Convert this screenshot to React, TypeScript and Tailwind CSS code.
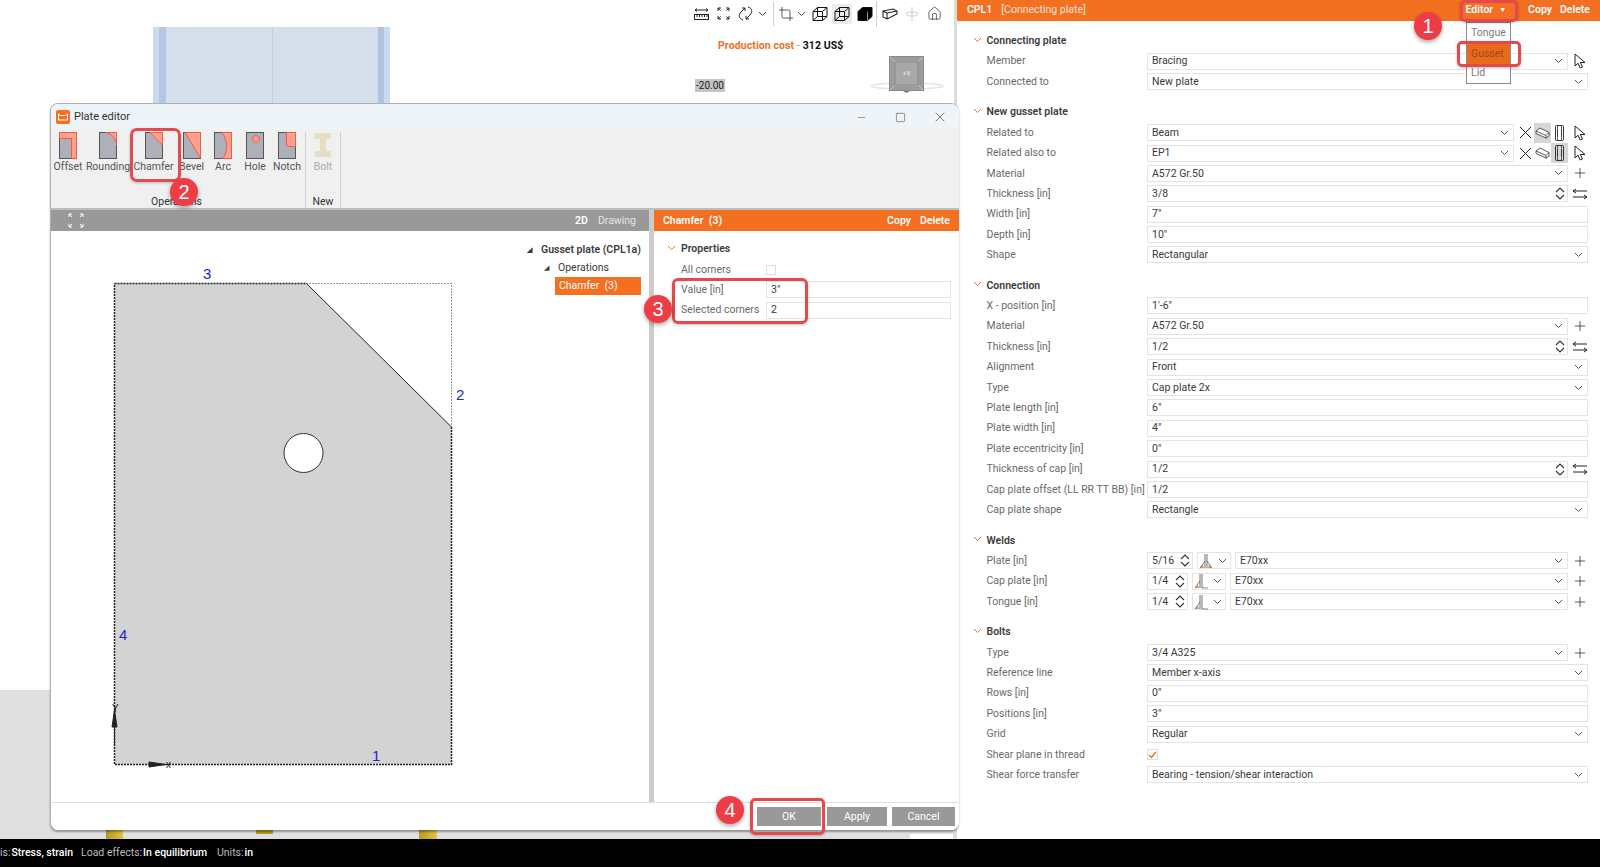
import { Crop, House, Minus, Plus, Square, X } from 'lucide-react';
import { ReactNode } from 'react';

const font = "font-['Roboto','Liberation_Sans',sans-serif]";

function Chevron({ className = 'text-[#555]' }: { className?: string }) {
  return (
    <svg width="9" height="6" viewBox="0 0 9 6" fill="none" className={`shrink-0 ${className}`}>
      <path d="M1 1l3.5 3.5L8 1" stroke="currentColor" strokeWidth="1" />
    </svg>
  );
}

function Spin() {
  return (
    <svg width="10" height="15" viewBox="0 0 10 15" fill="none" stroke="#333" strokeWidth="1.100" className="shrink-0">
      <path d="M1 6l4-4 4 4M1 9l4 4 4-4" />
    </svg>
  );
}

function Cursor() {
  return (
    <svg width="12" height="16" viewBox="0 0 12 16" fill="none" stroke="#222" strokeWidth="1">
      <path d="M1 1v12l3-2.800L6.200 15l2.300-1-2.200-4.500H11z" />
    </svg>
  );
}

function PlusIcon() {
  return <Plus size={16} strokeWidth={1.100} className="text-[#222]" />;
}

function Swap() {
  return (
    <svg width="16" height="12" viewBox="0 0 16 12" fill="none" stroke="#222" strokeWidth="1">
      <path d="M1 3h14M1 3l3-2M1 3l3 2" />
      <path d="M1 9h14M15 9l-3-2M15 9l-3 2" />
    </svg>
  );
}

function BeamIcon() {
  return (
    <svg width="15" height="12" viewBox="0 0 15 12" fill="none" stroke="#333" strokeWidth="0.800">
      <path d="M1 4l4-3 9 4.500v3.500l-3 2-10-4.500z" fill="#fff" />
      <path d="M1 4l10 4.500 3-3M11 8.500v3" />
    </svg>
  );
}

function ColumnIcon() {
  return (
    <svg width="9" height="16" viewBox="0 0 9 16" fill="none" stroke="#222" strokeWidth="0.900">
      <rect x="0.500" y="0.500" width="8" height="15" rx="1" />
      <path d="M2.500 3.500v9M6.500 3.500v9" />
      <path d="M2 2h1M6 2h1M2 14h1M6 14h1" strokeWidth="1.300" />
    </svg>
  );
}

function WeldIcon({ double }: { double?: boolean }) {
  return (
    <svg width="16" height="16" viewBox="0 0 16 16" fill="none">
      <path d="M1 15l3-3.500 1 3.500z" fill="#f58a4b" />
      {double && <path d="M13 15l-3-3.500-1 3.500z" fill="#f58a4b" />}
      <path d="M6 1v14M8 1v14" stroke="#333" strokeWidth="0.700" />
      {double ? (
        <path d="M6 8l-5 7M8 8l5 7" stroke="#333" strokeWidth="0.600" />
      ) : (
        <path d="M6 8l-5 7M8 15h6" stroke="#333" strokeWidth="0.600" />
      )}
    </svg>
  );
}

function Field({ value, chevron, spin, className = 'flex-1' }: { value?: string; chevron?: boolean; spin?: boolean; className?: string }) {
  return (
    <div className={`flex h-[17px] min-w-0 items-center justify-between border border-[#e4e4e4] bg-white pl-[4px] text-[#3a3a3a] ${spin ? 'pr-[2px]' : 'pr-[4px]'} ${className}`}>
      <span className="whitespace-nowrap">{value}</span>
      {chevron && <Chevron />}
      {spin && <Spin />}
    </div>
  );
}

function Row({ label, children }: { label: string; children: ReactNode }) {
  return (
    <div className="flex h-[20.4px] items-center">
      <div className="w-[160.5px] shrink-0 whitespace-nowrap text-[#6a6a6a]">{label}</div>
      <div className="flex min-w-0 flex-1 items-center">{children}</div>
    </div>
  );
}

function Tail({ children }: { children: ReactNode }) {
  return <div className="flex w-[20px] shrink-0 items-center justify-center pl-[3px]">{children}</div>;
}

function Section({ title, children }: { title: string; children: ReactNode }) {
  return (
    <section className="mb-[10.2px]">
      <div className="relative flex h-[20.4px] items-center font-semibold text-[#3c3c3c]">
        <span className="absolute -left-[14px] top-[6px]">
          <Chevron className="text-[#f36f21]" />
        </span>
        {title}
      </div>
      {children}
    </section>
  );
}

function PickerRow({ label, value, active }: { label: string; value: string; active: 'beam' | 'column' }) {
  return (
    <Row label={label}>
      <Field value={value} chevron className="w-[366.5px] shrink-0" />
      <div className="ml-[3px] flex w-[54px] items-center">
        <span className="flex w-[17px] justify-center">
          <svg width="13" height="13" viewBox="0 0 13 13" fill="none" stroke="#222" strokeWidth="1">
            <path d="M1 1l11 11M12 1L1 12" />
          </svg>
        </span>
        <span className={`flex h-[20px] w-[17px] items-center justify-center ${active === 'beam' ? 'bg-[#d6d6d6]' : ''}`}>
          <BeamIcon />
        </span>
        <span className={`flex h-[20px] w-[17px] items-center justify-center ${active === 'column' ? 'bg-[#d6d6d6]' : ''}`}>
          <ColumnIcon />
        </span>
      </div>
      <Tail>
        <Cursor />
      </Tail>
    </Row>
  );
}

function WeldRow({ label, value, wide }: { label: string; value: string; wide?: boolean }) {
  return (
    <Row label={label}>
      <Field value={value} spin className={wide ? 'w-[46px] shrink-0' : 'w-[41px] shrink-0'} />
      <div className="ml-[4px] flex h-[17px] w-[34px] shrink-0 items-center justify-between border border-[#e4e4e4] pl-[1px] pr-[3px]">
        <WeldIcon double={wide} />
        <Chevron />
      </div>
      <Field value="E70xx" chevron className="ml-[4px] flex-1" />
      <Tail>
        <PlusIcon />
      </Tail>
    </Row>
  );
}

function PropertiesPanel() {
  return (
    <aside className="h-full w-[643px] shrink-0 bg-white text-[10.5px]">
      <header className="flex h-[20.5px] items-center bg-[#f36f21] pl-[10px] pr-[10px] text-white">
        <span className="font-semibold">CPL1</span>
        <span className="ml-[9px] text-[#fde3d3]">[Connecting plate]</span>
        <span className="ml-auto flex items-center font-semibold">
          <span className="mr-[6px]">Editor</span>
          <span className="mr-[22px] text-[7px]">▼</span>
          <span className="mr-[8px]">Copy</span>
          <span>Delete</span>
        </span>
      </header>
      <div className="pl-[29.5px] pr-[12px] pt-[10.2px]">
        <Section title="Connecting plate">
          <Row label="Member">
            <Field value="Bracing" chevron />
            <Tail>
              <Cursor />
            </Tail>
          </Row>
          <Row label="Connected to">
            <Field value="New plate" chevron />
          </Row>
        </Section>
        <Section title="New gusset plate">
          <PickerRow label="Related to" value="Beam" active="beam" />
          <PickerRow label="Related also to" value="EP1" active="column" />
          <Row label="Material">
            <Field value="A572 Gr.50" chevron />
            <Tail>
              <PlusIcon />
            </Tail>
          </Row>
          <Row label="Thickness [in]">
            <Field value="3/8" spin />
            <Tail>
              <Swap />
            </Tail>
          </Row>
          <Row label="Width [in]">
            <Field value={'7"'} />
          </Row>
          <Row label="Depth [in]">
            <Field value={'10"'} />
          </Row>
          <Row label="Shape">
            <Field value="Rectangular" chevron />
          </Row>
        </Section>
        <Section title="Connection">
          <Row label="X - position [in]">
            <Field value={'1\'-6"'} />
          </Row>
          <Row label="Material">
            <Field value="A572 Gr.50" chevron />
            <Tail>
              <PlusIcon />
            </Tail>
          </Row>
          <Row label="Thickness [in]">
            <Field value="1/2" spin />
            <Tail>
              <Swap />
            </Tail>
          </Row>
          <Row label="Alignment">
            <Field value="Front" chevron />
          </Row>
          <Row label="Type">
            <Field value="Cap plate 2x" chevron />
          </Row>
          <Row label="Plate length [in]">
            <Field value={'6"'} />
          </Row>
          <Row label="Plate width [in]">
            <Field value={'4"'} />
          </Row>
          <Row label="Plate eccentricity [in]">
            <Field value={'0"'} />
          </Row>
          <Row label="Thickness of cap [in]">
            <Field value="1/2" spin />
            <Tail>
              <Swap />
            </Tail>
          </Row>
          <Row label="Cap plate offset (LL RR TT BB) [in]">
            <Field value="1/2" />
          </Row>
          <Row label="Cap plate shape">
            <Field value="Rectangle" chevron />
          </Row>
        </Section>
        <Section title="Welds">
          <WeldRow label="Plate [in]" value="5/16" wide />
          <WeldRow label="Cap plate [in]" value="1/4" />
          <WeldRow label="Tongue [in]" value="1/4" />
        </Section>
        <Section title="Bolts">
          <Row label="Type">
            <Field value="3/4 A325" chevron />
            <Tail>
              <PlusIcon />
            </Tail>
          </Row>
          <Row label="Reference line">
            <Field value="Member x-axis" chevron />
          </Row>
          <Row label="Rows [in]">
            <Field value={'0"'} />
          </Row>
          <Row label="Positions [in]">
            <Field value={'3"'} />
          </Row>
          <Row label="Grid">
            <Field value="Regular" chevron />
          </Row>
          <Row label="Shear plane in thread">
            <span className="flex size-[11px] items-center justify-center border border-[#e0e0e0]">
              <svg width="9" height="8" viewBox="0 0 9 8" fill="none" stroke="#f36f21" strokeWidth="1.400">
                <path d="M1 4l2.500 2.500L8 1" />
              </svg>
            </span>
          </Row>
          <Row label="Shear force transfer">
            <Field value="Bearing - tension/shear interaction" chevron />
          </Row>
        </Section>
      </div>
    </aside>
  );
}

function WireCube({ solid }: { solid?: boolean }) {
  return (
    <svg width="16" height="16" viewBox="0 0 16 16" fill={solid ? '#000' : 'none'} stroke="#111" strokeWidth="1">
      <path d="M1 5.500L5.500 1.500H15V10.500L10.500 14.500H1z" />
      {!solid && <path d="M1 5.500h9.500v9M10.500 5.500L15 1.500M1 14.500l4.500-4V1.500M5.500 10.500H15" />}
      {solid && <path d="M10.500 5.500V14.500" stroke="#fff" strokeWidth="0.600" />}
    </svg>
  );
}

function Toolbar() {
  return (
    <div className="flex h-[27px] items-center justify-end pr-[12px] text-[#222]">
      <svg width="15" height="14" viewBox="0 0 15 14" fill="none" stroke="#222" strokeWidth="1" className="mr-[8px]">
        <path d="M1 3h13M1 3l2-1.500M1 3l2 1.500M14 3l-2-1.500M14 3l-2 1.500" />
        <rect x="0.500" y="7.500" width="14" height="5" />
        <path d="M3 8v2M5.500 8v2M8 8v2M10.500 8v2M13 8v2" />
      </svg>
      <svg width="13" height="13" viewBox="0 0 13 13" fill="none" stroke="#222" strokeWidth="1" className="mr-[8px]">
        <path d="M1 4V1h3M1 1l2.500 2.500M9 1h3v3M12 1L9.500 3.500M1 9v3h3M1 12l2.500-2.500M9 12h3V9M12 12L9.500 9.500" />
      </svg>
      <svg width="15" height="15" viewBox="0 0 15 15" fill="none" stroke="#222" strokeWidth="1">
        <path d="M5 14C1 13 0 9 3 6l4-4M7 5V2H4M10 1c4 1 5 5 2 8l-4 4M8 10v3h3" />
      </svg>
      <Chevron className="ml-[5px] text-[#444]" />
      <span className="ml-[6px] mr-[4px] h-[24px] w-px bg-[#d0d0d0]" />
      <Crop size={16} strokeWidth={1.100} />
      <Chevron className="ml-[3px] text-[#444]" />
      <span className="ml-[4px] flex size-[20px] items-center justify-center">
        <WireCube />
      </span>
      <span className="ml-[2px] flex size-[20px] items-center justify-center bg-[#ececec]">
        <WireCube />
      </span>
      <span className="ml-[3px] flex size-[20px] items-center justify-center">
        <WireCube solid />
      </span>
      <span className="ml-[1px] mr-[3px] h-[26px] w-px bg-[#d0d0d0]" />
      <svg width="16" height="12" viewBox="0 0 16 12" fill="none" stroke="#222" strokeWidth="1.100" className="ml-[2px]">
        <path d="M1 3l10-2 4 2v3L5 11 1 9zM1 3l4 2 10-2M5 5v6" />
      </svg>
      <svg width="14" height="14" viewBox="0 0 14 14" fill="none" stroke="#c9c9c9" strokeWidth="1" className="ml-[7px]">
        <path d="M7 0v14M1 7c0-2 4-2 6-2M13 7c0-2-4-2-6-2M1 7c0 2 4 2 6 2M13 7c0 2-4 2-6 2" />
      </svg>
      <House size={15} strokeWidth={1.100} className="ml-[8px]" />
    </div>
  );
}

function ModelCanvas() {
  return (
    <div className="relative h-full w-[957px] shrink-0 border-r-[3px] border-[#dcdcdc] bg-white">
      <div className="absolute left-[153px] top-[27px] flex h-[90px] w-[237px] border-x-[6px] border-[#cbdaee] bg-[#d5dfec]">
        <div className="w-[7px] bg-[#b4c7e0]" />
        <div className="flex-1 border-r border-[#bccfe8]" />
        <div className="flex-1" />
        <div className="w-[6px] bg-[#b0c4de]" />
      </div>
      <div className="absolute bottom-0 left-0 h-[149px] w-full bg-[#e0e0e0]" />
      <div className="absolute bottom-0 left-[106px] h-[9px] w-[17px] bg-gradient-to-r from-[#b89a1c] to-[#e0c640]" />
      <div className="absolute bottom-[5px] left-[256px] h-[5px] w-[17px] bg-[#b89a1c]" />
      <div className="absolute bottom-0 left-[419px] h-[9px] w-[18px] bg-gradient-to-r from-[#b89a1c] to-[#e0c640]" />
      <div className="absolute bottom-0 left-[910px] h-[5px] w-[43px] bg-white" />
      <div className="relative">
        <Toolbar />
        <p className="ml-[718px] mt-[12px] text-[10.5px] font-bold leading-[14px] tracking-[0.1px] text-[#f36f21]">
          Production cost <span className="font-normal">-</span> <span className="text-[#111]">312 US$</span>
        </p>
      </div>
      <div className="absolute left-[695px] top-[79px] flex h-[13px] w-[30px] items-center justify-center bg-[#c4c4c4] text-[10px] text-[#222]">-20.00</div>
      <svg width="76" height="40" viewBox="0 0 76 40" fill="none" className="absolute left-[869px] top-[55px]">
        <ellipse cx="38" cy="31" rx="36" ry="3" stroke="#e6e6e6" strokeWidth="1.500" />
        <rect x="20.500" y="1.500" width="34" height="34" fill="#9c9c9c" stroke="#8a8a8a" />
        <path d="M21 2l5 5h23l5-5M21 35l5-5h23l5 5" stroke="#c4c4c4" />
        <rect x="26" y="7" width="23" height="23" fill="#a8a8a8" stroke="#8a8a8a" />
        <text x="37.500" y="21" textAnchor="middle" fontSize="7" fill="#ececec" fontFamily="Roboto">+Y</text>
        <path d="M34 36h7l-3.500 2z" fill="#777" />
      </svg>
    </div>
  );
}

type OpKind = 'offset' | 'rounding' | 'chamfer' | 'bevel' | 'arc' | 'hole' | 'notch';

function OpIcon({ kind }: { kind: OpKind }) {
  const salmon = '#ff9f8c';
  const edge = '#e8604a';
  return (
    <svg width="18" height="27" viewBox="0 0 18 27" fill="none">
      <rect x="0.500" y="0.500" width="17" height="26" fill="#adb0b9" stroke="#555" />
      {kind === 'offset' && <path d="M0.500 0.500h17v26h-5V6.500H0.500z" fill={salmon} stroke={edge} />}
      {kind === 'rounding' && <path d="M6 0.500h11.500V13C17 6 12 1 6 0.500z" fill={salmon} stroke={edge} />}
      {kind === 'chamfer' && <path d="M5 0.500h12.500V13z" fill={salmon} stroke={edge} />}
      {kind === 'bevel' && <path d="M2 0.500h15.500V26z" fill={salmon} stroke={edge} />}
      {kind === 'arc' && <path d="M8 0.500h9.500v26H9c5-7 5-18-1-26z" fill={salmon} stroke={edge} />}
      {kind === 'hole' && <circle cx="10" cy="7" r="3.500" fill={salmon} stroke={edge} />}
      {kind === 'notch' && <path d="M8.500 0.500h9v14H11a2.500 2.500 0 0 1-2.500-2.500z" fill={salmon} stroke={edge} />}
    </svg>
  );
}

const ops: { label: string; kind: OpKind; width: string }[] = [
  { label: 'Offset', kind: 'offset', width: 'w-[34px]' },
  { label: 'Rounding', kind: 'rounding', width: 'w-[46px]' },
  { label: 'Chamfer', kind: 'chamfer', width: 'w-[45px]' },
  { label: 'Bevel', kind: 'bevel', width: 'w-[31px]' },
  { label: 'Arc', kind: 'arc', width: 'w-[32px]' },
  { label: 'Hole', kind: 'hole', width: 'w-[32px]' },
  { label: 'Notch', kind: 'notch', width: 'w-[32px]' },
];

function RibbonItem({ label, children, width, muted }: { label: string; children: ReactNode; width: string; muted?: boolean }) {
  return (
    <div className={`flex flex-col items-center ${width}`}>
      <div className="flex h-[28px] items-start justify-center">{children}</div>
      <span className={`whitespace-nowrap leading-[14px] ${muted ? 'text-[#aaa]' : 'text-[#555]'}`}>{label}</span>
    </div>
  );
}

function Ribbon() {
  return (
    <div className="flex h-[81px] border-b-2 border-[#bdbdbd] bg-[#f0f0f0] pt-[3px] text-[10.5px]">
      <div className="flex w-[255px] flex-col border-r border-[#cfcfcf]">
        <div className="flex flex-1">
          {ops.map((op) => (
            <RibbonItem key={op.kind} label={op.label} width={op.width}>
              <OpIcon kind={op.kind} />
            </RibbonItem>
          ))}
        </div>
        <div className="-mb-[1px] pr-[3px] text-center leading-[14px] text-[#333]">Operations</div>
      </div>
      <div className="flex w-[35px] flex-col border-r border-[#cfcfcf]">
        <div className="flex flex-1 justify-center">
          <RibbonItem label="Bolt" width="w-[35px]" muted>
            <svg width="16" height="26" viewBox="0 0 16 26" fill="#e6ddc4">
              <rect x="0" y="1" width="16" height="6" rx="1" />
              <rect x="5" y="6" width="6" height="14" />
              <rect x="0" y="19" width="16" height="6" rx="1" />
            </svg>
          </RibbonItem>
        </div>
        <div className="-mb-[1px] text-center leading-[14px] text-[#333]">New</div>
      </div>
    </div>
  );
}

function PlateDrawing() {
  return (
    <svg width="475" height="570" viewBox="51 232 475 570" className="shrink-0">
      <path d="M114.500 284.500H306.500L451.500 428V765.500H114.500z" fill="#d3d3d3" />
      <path d="M306.500 284.500H451.500V428" fill="none" stroke="#333" strokeWidth="1" strokeDasharray="1 2" />
      <path d="M306.500 284.500L451.500 428" fill="none" stroke="#222" strokeWidth="1" />
      <path d="M114.500 284.500H306.500M451.500 428V765.500H114.500V284.500" fill="none" stroke="#222" strokeWidth="1.500" strokeDasharray="2 1" />
      <circle cx="303.500" cy="454" r="19.500" fill="#fff" stroke="#333" strokeWidth="1" />
      <g fontFamily="Liberation Sans" fontSize="15" fill="#2222cc">
        <text x="203" y="280">3</text>
        <text x="456" y="401">2</text>
        <text x="119" y="641">4</text>
        <text x="372" y="762">1</text>
      </g>
      <path d="M114.500 745v-32M114.500 711l-2.500 17h5z" stroke="#222" strokeWidth="1" fill="#222" />
      <path d="M148 765.500h15M166 765.500l-17-2.500v5z" stroke="#222" strokeWidth="1" fill="#222" />
      <g fontFamily="Liberation Sans" fontSize="10" fill="#222">
        <text x="112" y="713">Y</text>
        <text x="166" y="769">x</text>
      </g>
    </svg>
  );
}

function PlateEditor() {
  return (
    <div className="absolute left-[50px] top-[103px] flex h-[727px] w-[909px] flex-col overflow-hidden rounded-t-lg rounded-b-lg border-l border-t border-[#b0b0b0] bg-white text-[10.5px] shadow-[0_2px_2px_rgba(0,0,0,0.35)]">
      <div className="flex h-[25px] shrink-0 items-center bg-[#eef4f8] pl-[5px] pt-[1px] text-[11px] text-[#333]">
        <svg width="14" height="14" viewBox="0 0 14 14" className="mr-[4px]">
          <rect width="14" height="14" rx="2" fill="#f36f21" />
          <path d="M2.500 4l2 1.500h5l2-1.500v6h-9z" fill="none" stroke="#fff" strokeWidth="1" />
        </svg>
        Plate editor
        <div className="ml-auto flex items-center text-[#333]">
          <span className="flex w-[39px] justify-center">
            <Minus size={11} strokeWidth={1} />
          </span>
          <span className="flex w-[39px] justify-center">
            <Square size={11} strokeWidth={1.100} />
          </span>
          <span className="flex w-[39px] justify-center">
            <X size={16} strokeWidth={1} />
          </span>
        </div>
      </div>
      <Ribbon />
      <div className="flex min-h-0 flex-1">
        <div className="flex w-[598px] shrink-0 flex-col">
          <div className="flex h-[21px] shrink-0 items-center bg-[#999] pl-[17px] pr-[13px] text-white">
            <svg width="16" height="15" viewBox="0 0 16 15" fill="none" stroke="#fff" strokeWidth="1">
              <path d="M1 1l3 3M1 1h3M1 1v3M15 1l-3 3M15 1h-3M15 1v3M1 14l3-3M1 14h3M1 14v-3M15 14l-3-3M15 14h-3M15 14v-3" />
            </svg>
            <span className="ml-auto font-semibold">2D</span>
            <span className="ml-[10px] text-[#e6e6e6]">Drawing</span>
          </div>
          <div className="flex min-h-0 flex-1">
            <PlateDrawing />
            <div className="pt-[10px] text-[#3c3c3c]">
              <div className="flex h-[18px] items-center font-semibold">
                <span className="ml-[1px] mr-[9px] text-[7px]">◢</span>
                <span className="whitespace-nowrap">Gusset plate (CPL1a)</span>
              </div>
              <div className="ml-[18px] flex h-[18px] items-center">
                <span className="mr-[9px] text-[7px]">◢</span>
                Operations
              </div>
              <div className="ml-[29px] flex h-[18px] w-[86px] items-center bg-[#f36f21] pl-[4px] text-white">Chamfer&nbsp; (3)</div>
            </div>
          </div>
        </div>
        <div className="w-[5px] shrink-0 bg-[#cccccc]" />
        <div className="flex min-w-0 flex-1 flex-col">
          <div className="flex h-[21px] shrink-0 items-center bg-[#f36f21] pl-[9px] pr-[9px] font-semibold text-white">
            Chamfer&nbsp; (3)
            <span className="ml-auto">Copy</span>
            <span className="ml-[9px]">Delete</span>
          </div>
          <div className="pl-[27px] pr-[8px] pt-[8px]">
            <div className="relative flex h-[20.4px] items-center font-semibold text-[#3c3c3c]">
              <span className="absolute -left-[14px] top-[6px]">
                <Chevron className="text-[#f36f21]" />
              </span>
              Properties
            </div>
            <div className="flex h-[20.4px] items-center">
              <span className="w-[85px] text-[#6a6a6a]">All corners</span>
              <span className="size-[10px] border border-[#dcdcdc]" />
            </div>
            <div className="flex h-[20.4px] items-center">
              <span className="w-[85px] text-[#6a6a6a]">Value [in]</span>
              <Field value={'3"'} />
            </div>
            <div className="flex h-[20.4px] items-center">
              <span className="w-[85px] whitespace-nowrap text-[#6a6a6a]">Selected corners</span>
              <Field value="2" />
            </div>
          </div>
        </div>
      </div>
      <div className="flex h-[28px] shrink-0 items-start justify-end border-t border-[#dedede] bg-white pr-[4px] pt-[4px] text-white">
        <button className="mr-[6px] h-[19px] w-[64px] bg-[#999]">OK</button>
        <button className="mr-[5px] h-[19px] w-[60px] bg-[#999]">Apply</button>
        <button className="h-[19px] w-[63px] bg-[#999]">Cancel</button>
      </div>
    </div>
  );
}

function Badge({ n, className }: { n: number; className: string }) {
  return (
    <span className={`absolute flex size-[28px] items-center justify-center rounded-full bg-[#ee3d45] font-['Liberation_Sans',sans-serif] text-[20px] text-white shadow-[0_2px_4px_rgba(0,0,0,0.35)] ${className}`}>
      {n}
    </span>
  );
}

const redBox = 'absolute border-[3px] border-[#e5484d] shadow-[0_1px_3px_rgba(0,0,0,0.25)]';

export default function App() {
  return (
    <div className={`relative flex h-[867px] w-[1600px] flex-col overflow-hidden bg-white ${font}`}>
      <main className="flex h-[839px] shrink-0">
        <ModelCanvas />
        <PropertiesPanel />
      </main>
      <footer className="flex h-[28px] shrink-0 items-center whitespace-nowrap bg-black text-[10.5px] text-[#bdbdbd]">
        <span className="w-[81px]">
          is:<span className="ml-[1px] font-medium text-white">Stress, strain</span>
        </span>
        <span className="w-[136px]">
          Load effects:<span className="ml-[1px] font-medium text-white">In equilibrium</span>
        </span>
        <span>
          Units:<span className="ml-[1px] font-medium text-white">in</span>
        </span>
      </footer>

      <PlateEditor />

      <div className="absolute left-[1466px] top-[22px] flex h-[62px] w-[45px] flex-col border border-[#8a8a8a] bg-white text-[10.5px] text-[#7a7a7a]">
        <span className="flex h-[21px] items-center pl-[4px]">Tongue</span>
        <span className="flex h-[21px] items-center bg-[#e9691f] pl-[4px] text-[#9c4b1c]">Gusset</span>
        <span className="flex h-[20px] items-center pl-[4px]">Lid</span>
      </div>

      <div className={`${redBox} left-[1460px] top-0 h-[22px] w-[58px] rounded-[5px]`} />
      <div className={`${redBox} left-[1457px] top-[41px] h-[26px] w-[64px] rounded-[5px]`} />
      <div className={`${redBox} left-[130px] top-[128px] h-[54px] w-[51px] rounded-[7px]`} />
      <div className={`${redBox} left-[672px] top-[278px] h-[46px] w-[136px] rounded-[6px]`} />
      <div className={`${redBox} left-[750px] top-[798px] h-[37px] w-[75px] rounded-[5px]`} />

      <Badge n={1} className="left-[1414px] top-[12px]" />
      <Badge n={2} className="left-[170px] top-[178px]" />
      <Badge n={3} className="left-[644px] top-[295px]" />
      <Badge n={4} className="left-[716px] top-[796px]" />
    </div>
  );
}
